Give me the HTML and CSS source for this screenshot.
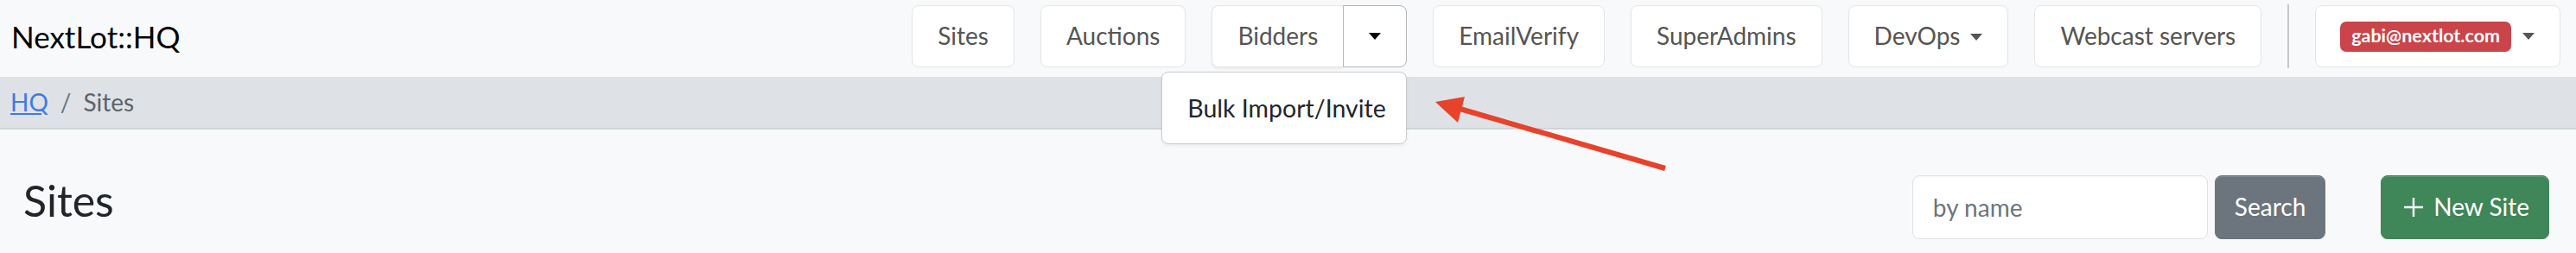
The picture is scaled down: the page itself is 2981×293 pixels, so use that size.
FILE: index.html
```html
<!DOCTYPE html>
<html lang="en">
<head>
<meta charset="utf-8">
<title>NextLot::HQ – Sites</title>
<link rel="stylesheet" href="styles.css">
</head>
<body>
<header class="navbar">
  <a class="brand" href="#">NextLot::HQ</a>
  <nav class="nav">
    <a class="nav-btn" href="#">Sites</a>
    <a class="nav-btn" href="#">Auctions</a>
    <div class="btn-group">
      <a class="nav-btn nav-btn--main" href="#">Bidders</a>
      <button class="nav-btn nav-btn--toggle" type="button"><span class="caret caret--dark"></span></button>
      <div class="dropdown-menu">
        <a class="dropdown-item" href="#">Bulk Import/Invite</a>
      </div>
    </div>
    <a class="nav-btn" href="#">EmailVerify</a>
    <a class="nav-btn" href="#">SuperAdmins</a>
    <a class="nav-btn nav-btn--dd" href="#">DevOps <span class="caret"></span></a>
    <a class="nav-btn" href="#">Webcast servers</a>
    <span class="divider"></span>
    <a class="nav-btn nav-btn--user" href="#"><span class="badge">gabi@nextlot.com</span><span class="caret"></span></a>
  </nav>
</header>

<div class="breadcrumb-bar">
  <ol class="breadcrumb">
    <li><a href="#">HQ</a></li>
    <li class="sep">/</li>
    <li class="current">Sites</li>
  </ol>
</div>

<main class="page">
  <h1 class="title">Sites</h1>
  <div class="actions">
    <form class="search">
      <input class="search-input" type="text" placeholder="by name">
      <button class="btn btn-secondary" type="button">Search</button>
    </form>
    <a class="btn btn-success" href="#">
      <svg class="plus" viewBox="0 0 24 24" width="24" height="24"><path d="M12 1v22M1 12h22" stroke="#fff" stroke-width="2.4" fill="none"/></svg>
      New Site
    </a>
  </div>
</main>

<svg class="annotation" viewBox="0 0 290 100" width="290" height="100">
  <line x1="36" y1="20" x2="277" y2="90" stroke="#e8422a" stroke-width="6" stroke-linecap="butt"/>
  <polygon points="11,13 45,7 37,37" fill="#e8422a"/>
</svg>
</body>
</html>
```
FILE: styles.css
```css
* { box-sizing: border-box; }

html, body {
  margin: 0;
  padding: 0;
  background: #f8f9fa;
  font-family: Lato, "Open Sans", "Liberation Sans", sans-serif;
  color: #212529;
}

.navbar {
  display: flex;
  align-items: center;
  height: 89px;
  padding: 6px 18px 11px 13px;
  background: #f8f9fa;
}

.brand {
  font-size: 35px;
  line-height: 1.2;
  color: #000;
  text-decoration: none;
}

.nav {
  margin-left: auto;
  display: flex;
  align-items: center;
  gap: 30px;
}

.nav-btn {
  display: inline-flex;
  align-items: center;
  height: 72px;
  padding: 0 29px;
  border: 1px solid #e3e4e6;
  border-radius: 8px;
  background: #fff;
  color: #555;
  font-family: inherit;
  font-size: 28px;
  line-height: 1.2;
  text-decoration: none;
}

.btn-group {
  position: relative;
  display: flex;
}

.nav-btn--main {
  border-top-right-radius: 0;
  border-bottom-right-radius: 0;
  border-right: 0;
  box-shadow: 0 2px 3px rgba(0, 0, 0, 0.06);
}

.nav-btn--toggle {
  width: 74px;
  justify-content: center;
  padding: 0;
  border-color: #b3b5b8;
  border-top-left-radius: 0;
  border-bottom-left-radius: 0;
  cursor: pointer;
}

.caret {
  display: inline-block;
  width: 0;
  height: 0;
  border-top: 8px solid #555;
  border-left: 7.5px solid transparent;
  border-right: 7.5px solid transparent;
}

.caret--dark { border-top-color: #000; }

.nav-btn--dd { gap: 12px; }
.nav-btn--dd .caret { margin-top: 2px; }

.dropdown-menu {
  position: absolute;
  top: calc(100% + 5px);
  right: 0;
  width: 284px;
  padding: 24px 0;
  background: #fff;
  border: 1px solid #c9cbcd;
  border-radius: 8px;
  box-shadow: 0 2px 4px rgba(0, 0, 0, 0.06);
  z-index: 10;
}

.dropdown-item {
  display: block;
  padding: 0 29px;
  font-size: 28.5px;
  line-height: 1.2;
  color: #212529;
  text-decoration: none;
  white-space: nowrap;
}

.divider {
  width: 2px;
  height: 74px;
  background: #c8c9cb;
}

.nav-btn--user {
  gap: 13px;
  padding: 0 29px 0 28px;
}

.badge {
  display: inline-flex;
  align-items: center;
  height: 35px;
  padding: 0 13px;
  border-radius: 7px;
  background: #cb444a;
  color: #fff;
  font-weight: 700;
  font-size: 21.5px;
  line-height: 1;
}

.breadcrumb-bar {
  height: 61px;
  background: #dee2e6;
  border-bottom: 2px solid #ced4da;
  display: flex;
  align-items: center;
  padding: 0 12px;
}

.breadcrumb {
  display: flex;
  align-items: center;
  gap: 14px;
  margin: 0;
  padding: 0;
  list-style: none;
  font-size: 28px;
  line-height: 1.2;
  color: #5d6369;
}

.breadcrumb a {
  color: #3b7ce8;
  text-decoration: underline;
}

.breadcrumb .sep { color: #6c757d; }

.page {
  display: flex;
  align-items: flex-start;
  justify-content: space-between;
  padding: 53px 31px 0 27px;
}

.title {
  margin: -1px 0 0;
  font-size: 50px;
  font-weight: 400;
  line-height: 1.2;
  color: #212529;
}

.actions {
  display: flex;
  align-items: center;
  gap: 64px;
}

.search {
  display: flex;
  gap: 8px;
  margin: 0;
}

.search-input {
  width: 342px;
  height: 74px;
  padding: 0 23px;
  border: 1px solid #dee2e6;
  border-radius: 8px;
  background: #fff;
  font-family: inherit;
  font-size: 28px;
  color: #212529;
  box-shadow: inset 0 1px 2px rgba(0, 0, 0, 0.04);
}

.search-input::placeholder { color: #6c757d; }

.btn {
  display: inline-flex;
  align-items: center;
  height: 74px;
  padding: 0 22px;
  border: 1px solid transparent;
  border-radius: 8px;
  font-family: inherit;
  font-size: 28px;
  line-height: 1.2;
  color: #fff;
  text-decoration: none;
  box-shadow: inset 0 1px 0 rgba(255, 255, 255, 0.15), 0 1px 1px rgba(0, 0, 0, 0.075);
  cursor: pointer;
}

.btn-secondary {
  background: #6c757d;
  border-color: #6c757d;
}

.btn-success {
  gap: 11px;
  padding: 0 22px 0 25px;
  background: #3f8658;
  border-color: #3f8658;
}

.plus { display: block; }

.annotation {
  position: absolute;
  left: 1650px;
  top: 105px;
  pointer-events: none;
}
```
